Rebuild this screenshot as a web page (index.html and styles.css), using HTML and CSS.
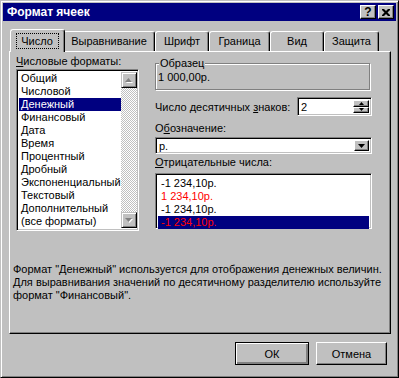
FILE: index.html
```html
<!DOCTYPE html>
<html>

<head>
    <title>Формат ячеек</title>
    <link rel="stylesheet" href="styles.css">
</head>

<body>
    <div class="dialog">
        <div class="titlebar">
            <span class="title">Формат ячеек</span>
            <div class="caption-btns">
                <div class="cap-btn help">?</div>
                <div class="cap-btn">
                    <svg width="8" height="7" viewBox="0 0 8 7">
                        <path d="M0 0h2l2 2 2-2h2v1l-2.5 2.5L8 6v1H6L4 5 2 7H0V6l2.5-2.5L0 1z" fill="#000"/>
                    </svg>
                </div>
            </div>
        </div>

        <div class="content">
            <div class="tabs">
                <div class="tab active"><span class="focus">Число</span></div>
                <div class="tab">Выравнивание</div>
                <div class="tab">Шрифт</div>
                <div class="tab">Граница</div>
                <div class="tab">Вид</div>
                <div class="tab">Защита</div>
            </div>

            <div class="panel">
                <div class="columns">
                    <div class="formats">
                        <div class="label"><u>Ч</u>исловые форматы:</div>
                        <div class="listbox">
                            <ul class="items">
                                <li>Общий</li>
                                <li>Числовой</li>
                                <li class="selected">Денежный</li>
                                <li>Финансовый</li>
                                <li>Дата</li>
                                <li>Время</li>
                                <li>Процентный</li>
                                <li>Дробный</li>
                                <li>Экспоненциальный</li>
                                <li>Текстовый</li>
                                <li>Дополнительный</li>
                                <li>(все форматы)</li>
                            </ul>
                            <div class="scrollbar">
                                <div class="scroll-btn">
                                    <svg width="8" height="5" viewBox="0 0 8 5">
                                        <path d="M4.5 1L8 5H1z" fill="#fff"/>
                                        <path d="M3.5 0L7 4H0z" fill="#808080"/>
                                    </svg>
                                </div>
                                <div class="track"></div>
                                <div class="scroll-btn">
                                    <svg width="8" height="5" viewBox="0 0 8 5">
                                        <path d="M1 1h7L4.5 5z" fill="#fff"/>
                                        <path d="M0 0h7L3.5 4z" fill="#808080"/>
                                    </svg>
                                </div>
                            </div>
                        </div>
                    </div>

                    <div class="options">
                        <fieldset class="sample">
                            <legend>Образец</legend>
                            <div class="sample-value">1 000,00р.</div>
                        </fieldset>

                        <div class="spin-row">
                            <span>Число десятичных <u>з</u>наков:</span>
                            <div class="spinbox">
                                <span class="spin-value">2</span>
                                <div class="spin-btns">
                                    <div class="spin-btn">
                                        <svg width="5" height="3" viewBox="0 0 5 3"><path d="M2.5 0L5 3H0z" fill="#000"/></svg>
                                    </div>
                                    <div class="spin-btn">
                                        <svg width="5" height="3" viewBox="0 0 5 3"><path d="M0 0h5L2.5 3z" fill="#000"/></svg>
                                    </div>
                                </div>
                            </div>
                        </div>

                        <div class="label">О<u>б</u>означение:</div>
                        <div class="combo">
                            <span class="combo-value">р.</span>
                            <div class="combo-btn">
                                <svg width="7" height="4" viewBox="0 0 7 4"><path d="M0 0h7L3.5 4z" fill="#000"/></svg>
                            </div>
                        </div>

                        <div class="label neg-label"><u>О</u>трицательные числа:</div>
                        <ul class="neg-list">
                            <li>-1 234,10р.</li>
                            <li class="red">1 234,10р.</li>
                            <li>-1 234,10р.</li>
                            <li class="red selected">-1 234,10р.</li>
                        </ul>
                    </div>
                </div>

                <p class="desc">Формат "Денежный" используется для отображения денежных величин.<br>
                    Для выравнивания значений по десятичному разделителю используйте<br>
                    формат "Финансовый".</p>
            </div>

            <div class="actions">
                <button class="btn default">ОК</button>
                <button class="btn">Отмена</button>
            </div>
        </div>
    </div>
</body>

</html>
```

FILE: styles.css
```css
body {
    margin: 0;
    background: #c0c0c0;
    font-family: "Liberation Sans", Arial, sans-serif;
    font-size: 11px;
    color: #000;
}

ul {
    list-style: none;
    margin: 0;
    padding: 0;
}

.dialog {
    width: 399px;
    height: 378px;
    box-sizing: border-box;
    background: #c0c0c0;
    border: 1px solid;
    border-color: #c0c0c0 #000 #000 #c0c0c0;
    box-shadow: inset 1px 1px #fff, inset -1px -1px #808080;
    padding: 2px;
    display: flex;
    flex-direction: column;
}

/* title bar */
.titlebar {
    height: 18px;
    background: #000080;
    color: #fff;
    display: flex;
    align-items: center;
    justify-content: space-between;
    padding: 0 2px 0 4px;
}

.title {
    font-weight: bold;
    font-size: 12px;
}

.caption-btns {
    display: flex;
    gap: 2px;
}

.cap-btn {
    width: 16px;
    height: 14px;
    box-sizing: border-box;
    background: #c0c0c0;
    border: 1px solid;
    border-color: #fff #000 #000 #fff;
    box-shadow: inset -1px -1px #808080;
    display: flex;
    align-items: center;
    justify-content: center;
    color: #000;
}

.cap-btn.help {
    font-weight: bold;
    font-size: 12px;
    line-height: 12px;
}

/* body */
.content {
    padding: 8px 5px 0 6px;
    flex: 1;
    display: flex;
    flex-direction: column;
}

.tabs {
    display: flex;
    align-items: flex-end;
    height: 22px;
    padding-left: 2px;
}

.tab {
    height: 20px;
    box-sizing: border-box;
    border: 1px solid;
    border-bottom: none;
    border-color: #fff #000 #000 #fff;
    border-radius: 3px 3px 0 0;
    box-shadow: inset -1px 0 #808080;
    padding-top: 3px;
    line-height: 13px;
    text-align: center;
}

.tab:nth-child(2) { width: 92px; }
.tab:nth-child(3) { width: 54px; }
.tab:nth-child(4) { width: 61px; }
.tab:nth-child(5) { width: 54px; }
.tab:nth-child(6) { width: 55px; }

.tab.active {
    width: 55px;
    height: 23px;
    margin: 0 -2px -1px -1px;
    padding-top: 4px;
    background: #c0c0c0;
    position: relative;
    z-index: 1;
}

.focus {
    outline: 1px dotted #000;
    outline-offset: 0;
    padding: 0 5px 0 4px;
    display: inline-block;
    line-height: 14px;
}

.panel {
    height: 283px;
    box-sizing: border-box;
    border: 1px solid;
    border-color: #fff #000 #000 #fff;
    box-shadow: inset -1px -1px #808080;
    padding: 3px 0 0 6px;
}

.columns {
    display: grid;
    grid-template-columns: 123px 217px;
    column-gap: 16px;
    align-items: start;
}

.label {
    line-height: 13px;
}

/* format list */
.listbox {
    margin-top: 1px;
    height: 162px;
    box-sizing: border-box;
    border: 1px solid;
    border-color: #808080 #fff #fff #808080;
    box-shadow: inset 1px 1px #000, inset -1px -1px #c0c0c0;
    padding: 2px;
    background: #fff;
    display: flex;
}

.items {
    flex: 1;
}

.items li {
    line-height: 13px;
    padding-left: 2px;
    white-space: nowrap;
}

.selected {
    background: #000080;
    color: #fff;
}

.scrollbar {
    width: 16px;
    display: flex;
    flex-direction: column;
}

.scroll-btn {
    width: 16px;
    height: 16px;
    box-sizing: border-box;
    background: #c0c0c0;
    border: 1px solid;
    border-color: #c0c0c0 #000 #000 #c0c0c0;
    box-shadow: inset 1px 1px #fff, inset -1px -1px #808080;
    display: flex;
    align-items: center;
    justify-content: center;
}

.track {
    flex: 1;
    background: repeating-conic-gradient(#c0c0c0 0 25%, #fff 0 50%) 0 0 / 2px 2px;
}

/* right column */
.sample {
    margin: 2px 2px 0 0;
    padding: 1px 0 5px 2px;
    border: 1px solid #808080;
    box-shadow: 1px 1px #fff, inset 1px 1px #fff;
}

.sample legend {
    padding: 0 1px;
    margin-left: 1px;
    background: #c0c0c0;
    line-height: 13px;
}

.sample-value {
    line-height: 13px;
}

.spin-row {
    margin-top: 7px;
    display: flex;
    align-items: center;
    justify-content: space-between;
}

.spinbox {
    width: 75px;
    height: 19px;
    box-sizing: border-box;
    border: 1px solid;
    border-color: #808080 #fff #fff #808080;
    box-shadow: inset 1px 1px #000, inset -1px -1px #c0c0c0;
    background: #fff;
    padding: 2px;
    display: flex;
    justify-content: space-between;
}

.spin-value {
    line-height: 15px;
    padding-left: 1px;
}

.spin-btns {
    display: flex;
    flex-direction: column;
    width: 16px;
}

.spin-btn {
    flex: 1;
    box-sizing: border-box;
    background: #c0c0c0;
    border: 1px solid;
    border-color: #fff #000 #000 #fff;
    box-shadow: inset -1px -1px #808080;
    display: flex;
    align-items: center;
    justify-content: center;
}

.spin-row + .label {
    margin-top: 6px;
}

.combo {
    margin-top: 2px;
    height: 17px;
    box-sizing: border-box;
    border: 1px solid;
    border-color: #808080 #fff #fff #808080;
    box-shadow: inset 1px 1px #000, inset -1px -1px #c0c0c0;
    background: #fff;
    padding: 2px;
    display: flex;
    justify-content: space-between;
}

.combo-value {
    line-height: 13px;
    padding-left: 1px;
}

.combo-btn {
    width: 15px;
    box-sizing: border-box;
    background: #c0c0c0;
    border: 1px solid;
    border-color: #fff #000 #000 #fff;
    box-shadow: inset -1px -1px #808080;
    display: flex;
    align-items: center;
    justify-content: center;
}

.neg-label {
    margin-top: 2px;
}

.neg-list {
    margin-top: 4px;
    height: 56px;
    box-sizing: border-box;
    border: 1px solid;
    border-color: #808080 #fff #fff #808080;
    box-shadow: inset 1px 1px #000, inset -1px -1px #c0c0c0;
    background: #fff;
    padding: 2px;
}

.neg-list li {
    line-height: 13px;
    padding-left: 3px;
}

.neg-list li:first-child {
    margin-top: 1px;
}

.red {
    color: #ff0000;
}

.desc {
    margin: 32px 0 0 -3px;
    line-height: 13px;
}

/* buttons */
.actions {
    display: flex;
    justify-content: flex-end;
    gap: 7px;
    padding: 8px 4px 0 0;
}

.btn {
    height: 23px;
    box-sizing: border-box;
    background: #c0c0c0;
    border: 1px solid;
    border-color: #fff #000 #000 #fff;
    box-shadow: inset -1px -1px #808080;
    font-family: inherit;
    font-size: 11px;
    color: #000;
    padding: 0;
    width: 71px;
}

.btn.default {
    width: 74px;
    border-color: #000;
    box-shadow: inset 1px 1px #fff, inset -2px -2px #808080, inset -1px -1px #000;
}
```
